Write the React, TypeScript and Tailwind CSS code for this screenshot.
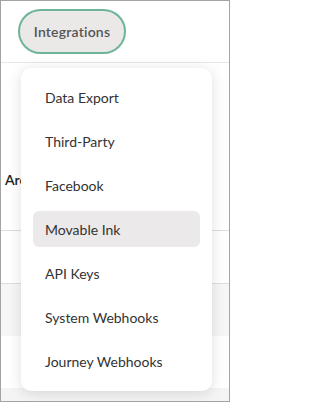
import React from "react";

const items = [
  "Data Export",
  "Third-Party",
  "Facebook",
  "Movable Ink",
  "API Keys",
  "System Webhooks",
  "Journey Webhooks",
];

export default function App() {
  return (
    <div
      className="relative w-[230px] h-[402px] overflow-hidden bg-white border border-[#a3a3a3] flex flex-col"
      style={{ fontFamily: "Lato, 'Noto Sans', sans-serif" }}
    >
      <div className="h-[62px] shrink-0 border-b border-[#e8e8e8] pl-[17px] pt-[8px]">
        <button className="h-[45px] w-[108px] rounded-full border-2 border-[#6db596] bg-[#ebe8e8] text-[14px] font-semibold text-[#555555] tracking-[0.2px]">
          Integrations
        </button>
      </div>
      <div className="h-[168px] shrink-0 border-b border-[#dddddd] pl-[4px] pt-[104px]">
        <span className="text-[14px] font-semibold text-[#222222]">Archived</span>
      </div>
      <div className="h-[53px] shrink-0 border-b border-[#dddddd] bg-white" />
      <div className="h-[52px] shrink-0 bg-[#f6f6f6]" />
      <div className="h-[52px] shrink-0 bg-white" />
      <div className="flex-1 bg-[#f4f4f4]" />

      <div className="absolute left-[20px] top-[67px] w-[191px] rounded-[10px] bg-white shadow-[0_2px_14px_rgba(0,0,0,0.13)] pt-[11px] pb-[12px] flex flex-col gap-[8px]">
        {items.map((t) => (
          <div
            key={t}
            className={
              t === "Movable Ink"
                ? "mx-[12px] h-[36px] rounded-[6px] bg-[#ebe9e9] pl-[12px] flex items-center text-[14px] text-[#333333]"
                : "mx-[12px] h-[36px] rounded-[6px] pl-[12px] flex items-center text-[14px] text-[#333333]"
            }
          >
            {t}
          </div>
        ))}
      </div>
    </div>
  );
}
